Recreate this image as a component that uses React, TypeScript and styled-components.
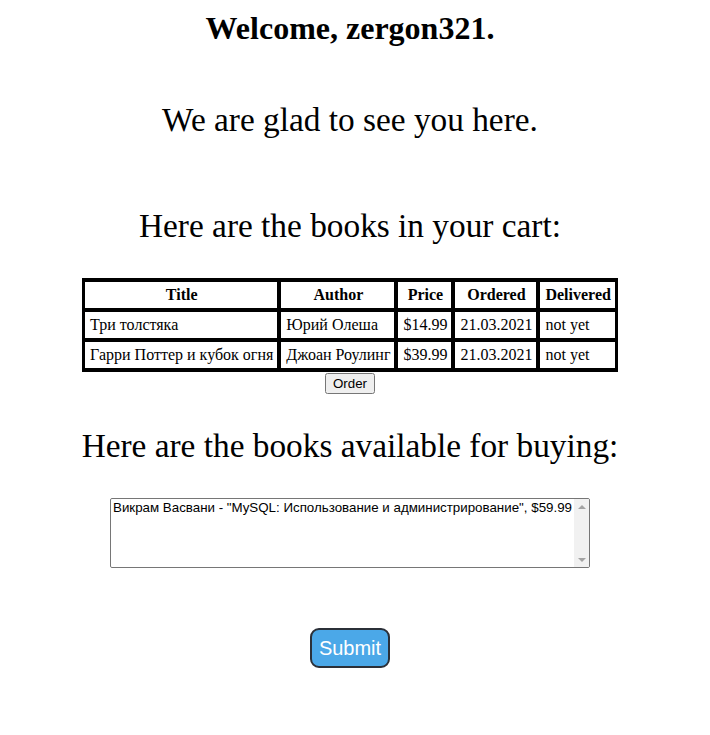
import styled, { createGlobalStyle } from 'styled-components';

const GlobalStyle = createGlobalStyle`
  body {
    margin: 0;
    background: #ffffff;
    color: #000000;
    font-family: "Liberation Serif", "Times New Roman", serif;
  }
`;

const Page = styled.div`
  width: 700px;
  display: flex;
  flex-direction: column;
  align-items: center;
  padding-top: 10px;
`;

const Heading = styled.h1<{ bold?: boolean; gap: number }>`
  margin: ${({ gap }) => gap}px 0 0;
  font-size: ${({ bold }) => (bold ? '32px' : '33.33px')};
  line-height: ${({ bold }) => (bold ? '37px' : '38px')};
  font-weight: ${({ bold }) => (bold ? 700 : 400)};
  text-align: center;
`;

const Table = styled.table`
  margin-top: 33px;
  background: #000000;
  border-collapse: separate;
  border-spacing: 2px;
  border-bottom: 1px solid #000000;
  border-top: 1px solid #000000;
  font-size: 16px;
`;

const Cell = styled.td`
  background: #ffffff;
  border: 1px solid #000000;
  padding: 4px 4px 4px 5px;
  line-height: 18px;
  white-space: nowrap;
  text-align: left;
`;

const HeadCell = styled(Cell).attrs({ as: 'th' })`
  font-weight: 700;
  text-align: center;
`;

const OrderButton = styled.button`
  margin-top: 1px;
  font-family: "Liberation Sans", Arial, sans-serif;
  font-size: 13.33px;
  padding: 1px 6px;
`;

const ListBox = styled.div`
  margin-top: 33px;
  width: 480px;
  height: 70px;
  box-sizing: border-box;
  display: flex;
  border: 1px solid #767676;
  border-radius: 2px;
  overflow: hidden;
`;

const BookList = styled.select`
  flex: 1;
  height: 100%;
  margin: 0;
  padding: 1px 0 0 0;
  border: none;
  outline: none;
  overflow: hidden;
  font-family: "Liberation Sans", Arial, sans-serif;
  font-size: 13.33px;
  color: #000000;
  background: #ffffff;
`;

const ScrollTrack = styled.div`
  width: 15px;
  background: #f1f1f1;
  display: flex;
  flex-direction: column;
  justify-content: space-between;
`;

const ScrollArrow = styled.div`
  height: 15px;
  display: flex;
  align-items: center;
  justify-content: center;
`;

const Triangle = styled.span<{ down?: boolean }>`
  width: 0;
  height: 0;
  border-left: 4px solid transparent;
  border-right: 4px solid transparent;
  ${({ down }) =>
    down ? 'border-top: 4px solid #a3a3a3;' : 'border-bottom: 4px solid #a3a3a3;'}
`;

const SubmitButton = styled.button`
  margin-top: 60px;
  width: 80px;
  height: 40px;
  background: #4ba8e8;
  border: 2px solid #2b3038;
  border-radius: 9px;
  color: #ffffff;
  font-family: "Liberation Sans", Arial, sans-serif;
  font-size: 20px;
  padding: 0;
`;

const cart = [
  { title: 'Три толстяка', author: 'Юрий Олеша', price: '$14.99', ordered: '21.03.2021', delivered: 'not yet' },
  { title: 'Гарри Поттер и кубок огня', author: 'Джоан Роулинг', price: '$39.99', ordered: '21.03.2021', delivered: 'not yet' },
];

export default function App() {
  return (
    <Page>
      <GlobalStyle />
      <Heading bold gap={0}>Welcome, zergon321.</Heading>
      <Heading gap={54}>We are glad to see you here.</Heading>
      <Heading gap={68}>Here are the books in your cart:</Heading>
      <Table>
        <thead>
          <tr>
            <HeadCell>Title</HeadCell>
            <HeadCell>Author</HeadCell>
            <HeadCell>Price</HeadCell>
            <HeadCell>Ordered</HeadCell>
            <HeadCell>Delivered</HeadCell>
          </tr>
        </thead>
        <tbody>
          {cart.map((book) => (
            <tr key={book.title}>
              <Cell>{book.title}</Cell>
              <Cell>{book.author}</Cell>
              <Cell>{book.price}</Cell>
              <Cell>{book.ordered}</Cell>
              <Cell>{book.delivered}</Cell>
            </tr>
          ))}
        </tbody>
      </Table>
      <OrderButton type="button">Order</OrderButton>
      <Heading gap={33}>Here are the books available for buying:</Heading>
      <ListBox>
        <BookList multiple size={4}>
          <option>Викрам Васвани - "MySQL: Использование и администрирование", $59.99</option>
        </BookList>
        <ScrollTrack>
          <ScrollArrow>
            <Triangle />
          </ScrollArrow>
          <ScrollArrow>
            <Triangle down />
          </ScrollArrow>
        </ScrollTrack>
      </ListBox>
      <SubmitButton type="submit">Submit</SubmitButton>
    </Page>
  );
}
